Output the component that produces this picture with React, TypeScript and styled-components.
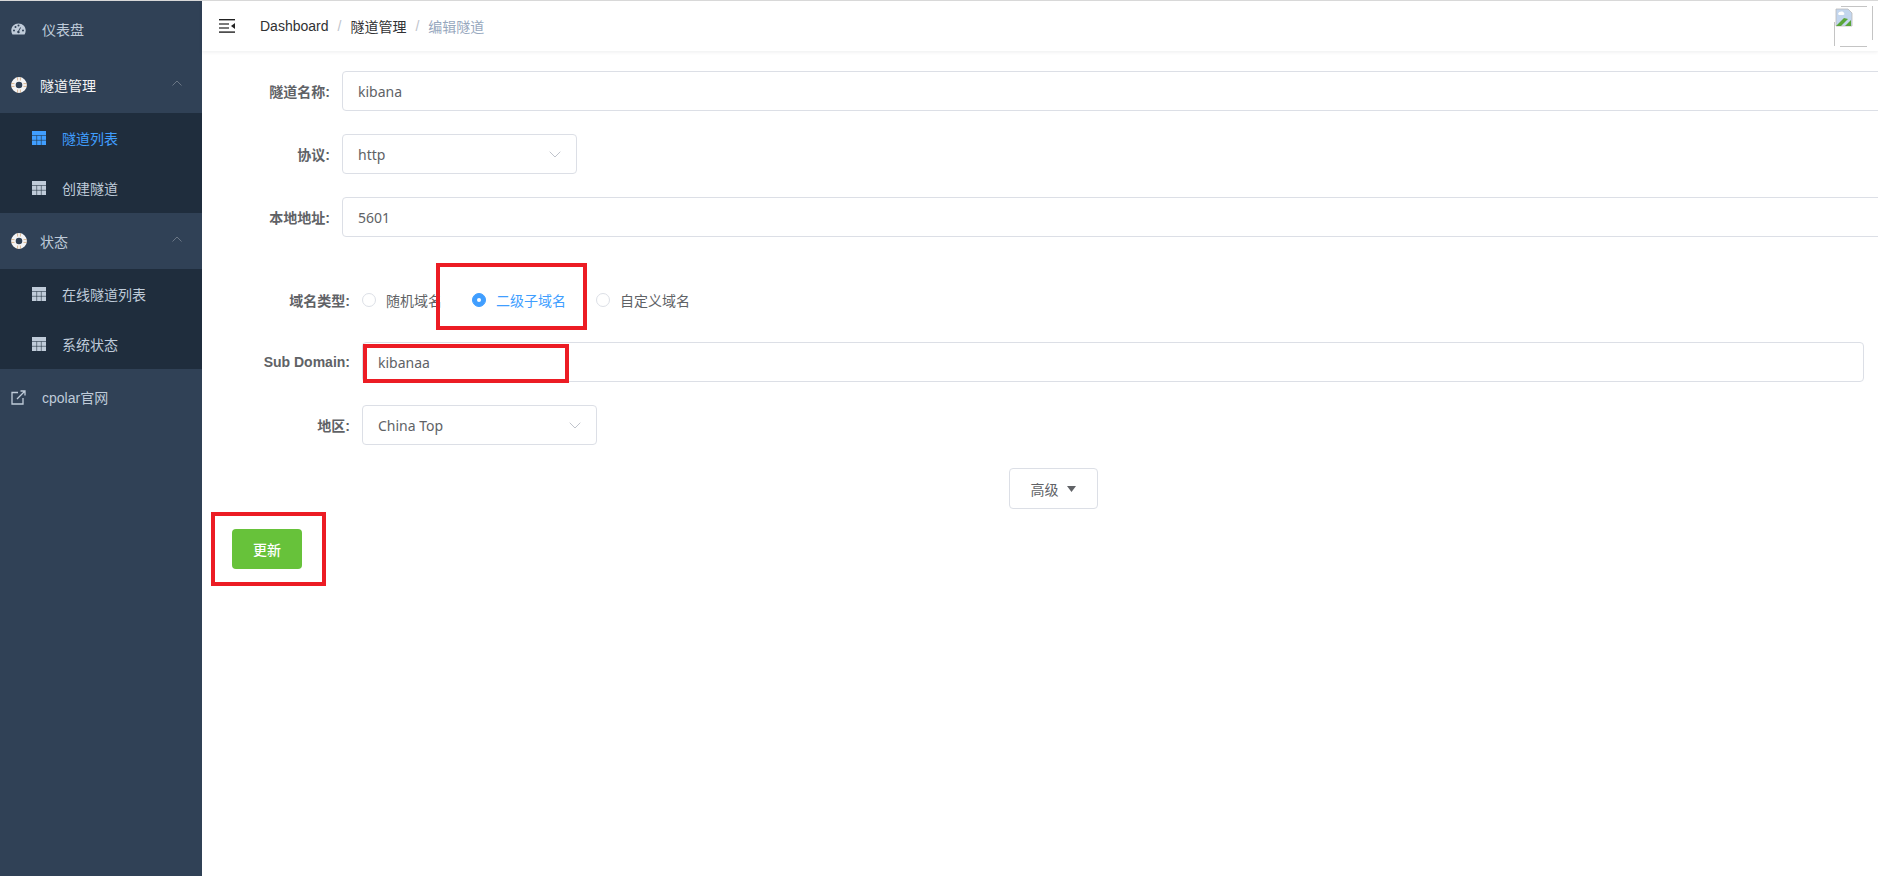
import React from "react";
import styled, { createGlobalStyle } from "styled-components";

const Global = createGlobalStyle`
  html, body { margin: 0; padding: 0; height: 100%; background: #fff; overflow: hidden; }
  #root { height: 100%; }
  * { box-sizing: border-box; }
  body { font-family: "Liberation Sans", "Noto Sans CJK SC", sans-serif; font-size: 14px; }
`;

const Page = styled.div`
  position: relative;
  display: flex;
  width: 1878px;
  height: 876px;
  border-top: 1px solid #d8d8d8;
  overflow: hidden;
`;
const Sidebar = styled.nav`
  flex: 0 0 202px;
  background: #304156;
  color: #bfcbd9;
  font-family: "Liberation Sans", "Noto Sans CJK SC", sans-serif;
  font-size: 14px;
`;
const TopItem = styled.div<{ $open?: boolean; $strong?: boolean }>`
  display: flex;
  align-items: center;
  height: 56px;
  padding-left: 11px;
  gap: ${(p) => (p.$open ? 13 : 16)}px;
  color: ${(p) => (p.$strong ? "#f4f4f5" : "#bfcbd9")};
`;
const Arrow = styled.svg`
  margin-left: auto;
  margin-right: 20px;
  margin-top: -4px;
`;
const SubMenu = styled.div`
  background: #1f2d3d;
`;
const SubItem = styled.div<{ $active?: boolean }>`
  display: flex;
  align-items: center;
  height: 50px;
  padding-left: 32px;
  gap: 16px;
  color: ${(p) => (p.$active ? "#409eff" : "#bfcbd9")};
`;
const Main = styled.main`
  flex: 1;
  min-width: 0;
  display: flex;
  flex-direction: column;
`;
const Header = styled.header`
  display: flex;
  align-items: center;
  flex: 0 0 50px;
  padding-left: 17px;
  padding-right: 5px;
  background: #fff;
  box-shadow: 0 1px 4px rgba(0, 21, 41, 0.08);
`;
const Crumbs = styled.div`
  display: flex;
  align-items: center;
  margin-left: 25px;
  font-family: "Liberation Sans", "Noto Sans CJK SC", sans-serif;
  font-size: 14px;
  color: #303133;
`;
const Sep = styled.span`
  color: #c0c4cc;
  margin: 0 9px;
`;
const LastCrumb = styled.span`
  color: #97a8be;
`;
const BrokenImage = styled.svg`
  margin-left: auto;
`;
const Form = styled.div`
  padding: 20px 0 0 30px;
  font-family: "Noto Sans CJK SC", "Noto Sans", sans-serif;
`;
const Row = styled.div<{ $gap?: number; $indent?: boolean }>`
  display: flex;
  align-items: center;
  height: 40px;
  margin-bottom: ${(p) => p.$gap ?? 23}px;
  margin-left: ${(p) => (p.$indent ? 0 : -10)}px;
`;
const Label = styled.label<{ $wide?: boolean }>`
  flex: 0 0 ${(p) => (p.$wide ? 130 : 120)}px;
  padding-right: 12px;
  text-align: right;
  font-family: "Liberation Sans", "Noto Sans CJK SC", sans-serif;
  font-weight: 700;
  font-size: 14px;
  color: #606266;
`;
const Input = styled.div<{ $width: number }>`
  flex: 0 0 ${(p) => p.$width}px;
  display: flex;
  align-items: center;
  justify-content: space-between;
  height: 40px;
  padding: 0 15px;
  border: 1px solid #dcdfe6;
  border-radius: 4px;
  font-family: "Noto Sans", "Noto Sans CJK SC", sans-serif;
  font-size: 14px;
  color: #606266;
`;
const Radios = styled.div`
  display: flex;
  align-items: center;
  gap: 30px;
`;
const Radio = styled.span<{ $on?: boolean }>`
  display: flex;
  align-items: center;
  gap: 10px;
  font-size: 14px;
  color: ${(p) => (p.$on ? "#409eff" : "#606266")};
`;
const RadioDot = styled.i<{ $on?: boolean }>`
  display: flex;
  align-items: center;
  justify-content: center;
  width: 14px;
  height: 14px;
  border-radius: 50%;
  border: 1px solid ${(p) => (p.$on ? "#409eff" : "#dcdfe6")};
  background: ${(p) => (p.$on ? "#409eff" : "#fff")};
  &::after {
    content: "";
    width: 4px;
    height: 4px;
    border-radius: 50%;
    background: #fff;
  }
`;
const AdvancedRow = styled.div`
  display: flex;
  justify-content: center;
  margin-left: -4px;
  margin-bottom: 20px;
`;
const AdvancedButton = styled.div`
  display: flex;
  align-items: center;
  justify-content: center;
  gap: 8px;
  width: 89px;
  height: 41px;
  border: 1px solid #dcdfe6;
  border-radius: 4px;
  font-size: 14px;
  color: #606266;
`;
const SubmitButton = styled.div`
  display: flex;
  align-items: center;
  justify-content: center;
  width: 70px;
  height: 40px;
  border-radius: 4px;
  background: #67c23a;
  color: #fff;
  font-size: 14px;
  font-weight: 500;
`;
const Mark = styled.div<{ $x: number; $y: number; $w: number; $h: number }>`
  position: absolute;
  left: ${(p) => p.$x}px;
  top: ${(p) => p.$y}px;
  width: ${(p) => p.$w}px;
  height: ${(p) => p.$h}px;
  border: 4px solid #ec1c24;
`;

const Gauge = () => (
  <svg width="15" height="12" viewBox="0 0 15 12">
    <path fill="#bfcbd9" fillRule="evenodd" d="M7.5 0.5C3.4 0.5 0.3 3.6 0.3 7.6c0 1.4.4 2.7 1 3.7.1.2.3.3.5.3h11.4c.2 0 .4-.1.5-.3.6-1 1-2.3 1-3.7C14.7 3.6 11.6.5 7.5.5zM3 8.4a1 1 0 1 1 0-2 1 1 0 0 1 0 2zm1.5-3.5a1 1 0 1 1 0-2 1 1 0 0 1 0 2zM7.5 3.4a1 1 0 1 1 0-2 1 1 0 0 1 0 2zm1.2 6.2a1.4 1.4 0 0 1-2.5-1.2c.3-.5.7-.7 1.1-.7l1.9-3.4.8.4-1.9 3.4c.3.4.8 1 .6 1.5zM12 8.4a1 1 0 1 1 0-2 1 1 0 0 1 0 2z" />
  </svg>
);
const Ring = () => (
  <svg width="16" height="16" viewBox="0 0 16 16">
    <circle cx="8" cy="8" r="5.6" fill="none" stroke="#f4f4f5" strokeWidth="4.6" />
    <path d="M6.6.3v3.2M9.4.3v3.2M6.6 12.5v3.2M9.4 12.5v3.2M.3 6.6h3.2M.3 9.4h3.2M12.5 6.6h3.2M12.5 9.4h3.2" stroke="#d2a778" strokeWidth="0.8" />
  </svg>
);
const TableIcon = ({ color }: { color: string }) => (
  <svg width="14" height="14" viewBox="0 0 14 14">
    <rect width="14" height="14" fill={color} />
    <path d="M0 4.5h14M0 9.3h14M4.7 4.5V14M9.3 4.5V14" stroke="#1f2d3d" strokeOpacity="0.55" strokeWidth="1" />
  </svg>
);
const ExternalIcon = () => (
  <svg width="15" height="15" viewBox="0 0 15 15" fill="none" stroke="#bfcbd9" strokeWidth="1.3">
    <path d="M7 2.5H1v11.5h11V8" />
    <path d="M6 9l7.5-7.5M9.5 1H14v4.5" />
  </svg>
);
const Chevron = () => (
  <Arrow width="10" height="6" viewBox="0 0 10 6" fill="none" stroke="#6a7685" strokeWidth="1">
    <path d="M.5 5.5L5 1l4.5 4.5" />
  </Arrow>
);
const SelectArrow = () => (
  <svg width="12" height="7" viewBox="0 0 12 7" fill="none" stroke="#c0c4cc" strokeWidth="1">
    <path d="M.7.7L6 6l5.3-5.3" />
  </svg>
);
const Hamburger = () => (
  <svg width="16" height="14" viewBox="0 0 16 14" fill="#222">
    <rect width="16" height="1.4" />
    <rect y="4.4" width="10" height="1.2" />
    <rect y="8.4" width="10" height="1.2" />
    <rect y="12.4" width="16" height="1.4" />
    <path d="M16 4v6l-4-3z" />
  </svg>
);
const Broken = () => (
  <BrokenImage width="39" height="41" viewBox="0 0 39 41">
    <path d="M.5 16V40M6 40.5H33M38.5 34V0M7 .5H33" stroke="#c4c4c4" strokeWidth="1" fill="none" />
    <path d="M2 3h12l4 4v13H2z" fill="#c3d6ee" stroke="#b9b9b9" strokeWidth="0.8" />
    <path d="M2 20l8-8 4 1-7 7z" fill="#5aa639" />
    <path d="M11 20l6-6v6z" fill="#5aa639" />
    <path d="M4 8c1-3 5-3 6-1 1 1 0 2-1 2H5z" fill="#fff" />
  </BrokenImage>
);

export default function App() {
  return (
    <Page>
      <Global />
      <Sidebar>
        <TopItem>
          <Gauge />
          <span>仪表盘</span>
        </TopItem>
        <TopItem $open $strong>
          <Ring />
          <span>隧道管理</span>
          <Chevron />
        </TopItem>
        <SubMenu>
          <SubItem $active>
            <TableIcon color="#409eff" />
            <span>隧道列表</span>
          </SubItem>
          <SubItem>
            <TableIcon color="#bfcbd9" />
            <span>创建隧道</span>
          </SubItem>
        </SubMenu>
        <TopItem $open>
          <Ring />
          <span>状态</span>
          <Chevron />
        </TopItem>
        <SubMenu>
          <SubItem>
            <TableIcon color="#bfcbd9" />
            <span>在线隧道列表</span>
          </SubItem>
          <SubItem>
            <TableIcon color="#bfcbd9" />
            <span>系统状态</span>
          </SubItem>
        </SubMenu>
        <TopItem>
          <ExternalIcon />
          <span>cpolar官网</span>
        </TopItem>
      </Sidebar>
      <Main>
        <Header>
          <Hamburger />
          <Crumbs>
            <span>Dashboard</span>
            <Sep>/</Sep>
            <span>隧道管理</span>
            <Sep>/</Sep>
            <LastCrumb>编辑隧道</LastCrumb>
          </Crumbs>
          <Broken />
        </Header>
        <Form>
          <Row>
            <Label>隧道名称:</Label>
            <Input $width={1600}>kibana</Input>
          </Row>
          <Row>
            <Label>协议:</Label>
            <Input $width={235}>
              http
              <SelectArrow />
            </Input>
          </Row>
          <Row $gap={43}>
            <Label>本地地址:</Label>
            <Input $width={1600}>5601</Input>
          </Row>
          <Row $gap={22} $indent>
            <Label $wide>域名类型:</Label>
            <Radios>
              <Radio>
                <RadioDot />
                随机域名
              </Radio>
              <Radio $on>
                <RadioDot $on />
                二级子域名
              </Radio>
              <Radio>
                <RadioDot />
                自定义域名
              </Radio>
            </Radios>
          </Row>
          <Row $indent>
            <Label $wide>Sub Domain:</Label>
            <Input $width={1502}>kibanaa</Input>
          </Row>
          <Row $indent>
            <Label $wide>地区:</Label>
            <Input $width={235}>
              China Top
              <SelectArrow />
            </Input>
          </Row>
          <AdvancedRow>
            <AdvancedButton>
              高级
              <svg width="9" height="6" viewBox="0 0 9 6">
                <path d="M0 0h9L4.5 6z" fill="#606266" />
              </svg>
            </AdvancedButton>
          </AdvancedRow>
          <SubmitButton>更新</SubmitButton>
        </Form>
      </Main>
      <Mark $x={436} $y={262} $w={151} $h={67} />
      <Mark $x={363} $y={343} $w={206} $h={39} />
      <Mark $x={211} $y={511} $w={115} $h={74} />
    </Page>
  );
}
